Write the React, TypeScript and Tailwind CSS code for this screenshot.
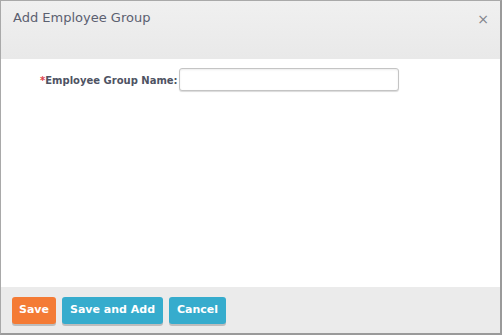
export default function App() {
  return (
    <div className="w-[502px] h-[335px] bg-white flex flex-col border-l border-t border-[#a9a9a9] border-r-2 border-b-2 border-r-[#9a9a9a] border-b-[#9a9a9a] font-['DejaVu_Sans',sans-serif]">
      <div className="h-[58px] shrink-0 bg-gradient-to-b from-[#f0f0f0] to-[#e9e9e9] flex items-start justify-between pl-[12px] pr-[11px] pt-[8px]">
        <h1 className="text-[13px] leading-[17px] text-[#5b6070]">Add Employee Group</h1>
        <button className="text-[#80848c] text-[14px] leading-[14px] mt-[3px]">×</button>
      </div>
      <div className="flex-1 flex items-start pt-[9px] pl-[39px]">
        <label className="text-[10px] font-bold text-[#4e5363] mt-[5px]">
          <span className="text-[#e0404a]">*</span>Employee Group Name:
        </label>
        <input
          type="text"
          className="ml-[1px] w-[220px] h-[23px] rounded-[3px] border border-[#c4c4c4] bg-white shadow-[inset_0_1px_2px_rgba(0,0,0,0.08),0_1px_1px_rgba(0,0,0,0.15)]"
        />
      </div>
      <div className="h-[46px] shrink-0 bg-[#ebebeb] flex items-start gap-[6px] pl-[11px] pt-[10px]">
        <button className="h-[27px] px-[7px] rounded-[3px] bg-[#f47b35] text-white text-[11px] font-bold shadow-[0_2px_0_#bdbdbd]">Save</button>
        <button className="h-[27px] px-[8px] rounded-[3px] bg-[#36accd] text-white text-[11px] font-bold shadow-[0_2px_0_#bdbdbd]">Save and Add</button>
        <button className="h-[27px] px-[8px] rounded-[3px] bg-[#36accd] text-white text-[11px] font-bold shadow-[0_2px_0_#bdbdbd]">Cancel</button>
      </div>
    </div>
  );
}
